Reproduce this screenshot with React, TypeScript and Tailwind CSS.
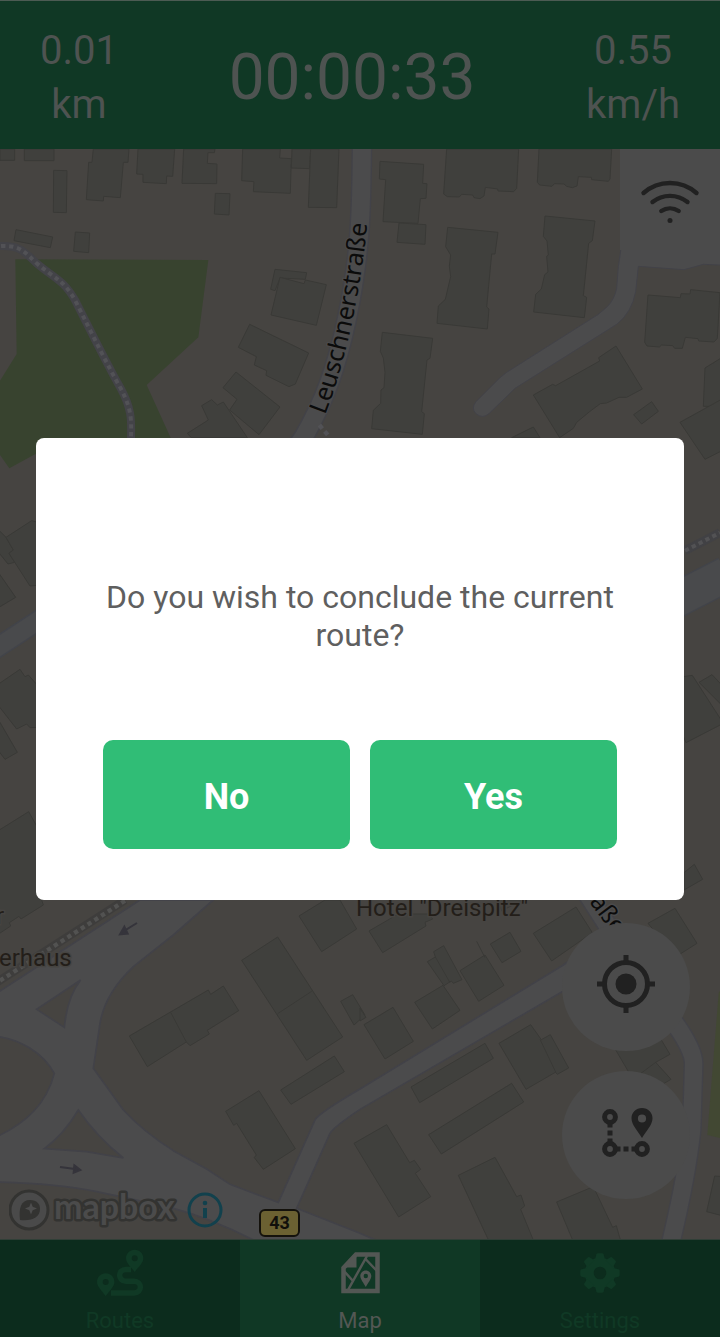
import React from "react";

const upperBuildings = [
  "0,27 44,27 44,61 0,61",
  "73,27 162,27 162,62 73,62",
  "161,91 201,92 199,218 160,217",
  "280,27 387,27 384,67 370,67 361,173 311,169 310,183 259,179 266,67 276,67",
  "414,27 524,27 518,109 500,108 499,131 429,127 429,103 410,102",
  "551,27 645,27 643,38 624,38 622,70 651,72 650,131 546,130",
  "728,27 841,27 839,54 874,56 871,160 760,155 762,125 725,122",
  "876,27 932,27 929,86 874,84",
  "932,27 1017,27 1010,203 925,202",
  "646,160 690,161 687,225 643,222",
  "48,269 158,291 151,323 42,302",
  "226,276 269,279 266,338 221,334",
  "825,388 920,398 916,418 840,414 825,452 812,448",
  "840,412 912,431 916,420 979,434 949,556 813,525",
  "749,553 926,639 886,732 867,740 798,706 800,692 763,675 769,650 715,622",
  "708,696 840,801 777,884 689,810 711,778 669,743",
  "635,779 652,795 670,786 742,893 574,893 562,880 625,840 605,797",
  "1140,64 1271,73 1268,130 1281,131 1278,175 1261,176 1254,250 1149,245 1157,119 1138,117",
  "1197,249 1278,254 1275,313 1191,307",
  "1340,27 1556,27 1550,145 1541,155 1494,153 1493,147 1456,142 1452,168 1440,176 1422,173 1418,165 1385,163 1378,171 1342,170 1331,162",
  "1617,27 1835,27 1830,117 1825,124 1775,119 1774,112 1735,110 1731,138 1717,143 1700,139 1692,132 1663,131 1656,139 1619,135 1612,127",
  "1343,262 1494,277 1485,342 1475,342 1460,501 1467,507 1462,567 1311,550 1315,498 1336,478 1346,435 1352,410 1348,378 1352,345 1337,320",
  "1635,228 1785,243 1777,302 1766,310 1750,467 1760,472 1753,533 1601,516 1607,463 1624,447 1634,404 1644,396 1640,349 1645,345 1641,303 1630,289",
  "1147,577 1298,595 1290,655 1281,660 1265,815 1273,821 1267,883 1115,866 1120,811 1142,790 1143,750 1152,743 1155,697 1150,654 1141,634",
  "1944,465 2041,473 2043,461 2070,462 2072,449 2160,458 2152,595 2142,606 2096,603 2094,596 2056,592 2047,625 2024,625 2018,617 1985,615 1978,621 1941,618 1934,607",
  "1848,618 1927,747 1880,772 1857,772 1820,789 1801,791 1770,814 1730,847 1720,865 1679,893 1600,765 1658,733 1667,737 1799,663 1796,653",
  "1955,785 1975,814 1925,852 1901,824",
  "2170,650 2115,684 2110,799 2170,800",
  "2170,775 2040,847 2115,958 2170,930",
  "1600,861 1620,893 1535,893",
];

const middleBuildings = [
  "-10,294 18,322 40,360 27,370 44,397 24,402 -10,360",
  "18,322 95,272 125,280 125,465 90,468 27,370 40,360",
  "-10,420 47,502 -10,536",
  "-10,766 60,718 75,740 85,735 125,780 125,892 90,893 80,882 50,897 -10,820",
  "-10,860 52,967 15,988 -10,955",
  "1980,750 2077,736 2170,880 2058,938",
  "2097,757 2136,734 2170,770 2170,830",
  "2052,1328 2083,1303 2108,1348 2052,1380",
];

const lowerBuildings = [
  "-10,-175 86,-235 125,-165 125,30 130,45 63,87 57,79 28,98 32,108 -10,136",
  "897,78 975,30 1020,30 1070,117 965,185",
  "833,141 1028,441 920,511 725,211",
  "388,438 625,300 632,313 670,288 716,362 622,421 628,432 570,467 559,456 442,530",
  "842,600 1003,498 1033,545 873,643",
  "677,664 777,602 886,776 790,838 763,803 769,795 710,700 701,706",
  "1022,334 1058,314 1095,375 1062,405",
  "1107,123 1195,72 1285,72 1298,87 1275,97 1278,108 1148,188",
  "1600,130 1728,51 1777,128 1655,213",
  "1471,162 1530,127 1563,184 1506,218",
  "1282,215 1306,201 1301,185 1331,167 1386,269 1360,280 1354,273 1332,287",
  "1380,242 1455,195 1512,286 1436,334",
  "1244,337 1329,286 1380,361 1297,417",
  "1092,404 1179,352 1240,454 1155,507",
  "1080,355 1098,382 1080,393",
  "1944,100 2025,55 2091,160 2028,200",
  "1497,460 1592,404 1624,449 1651,434 1706,534 1672,553 1666,547 1578,598",
  "1233,591 1455,460 1480,505 1259,638",
  "1286,734 1535,580 1571,636 1324,792",
  "1846,478 1978,440 2010,493 1967,517 2013,568 1975,590 1900,570",
  "1062,760 1160,704 1229,818 1243,811 1262,838 1246,850 1292,920 1196,981",
  "1375,856 1485,802 1550,920 1563,915 1574,948 1562,958 1604,1060 1470,1060",
  "1670,936 1780,890 1838,1012 1849,1007 1864,1060 1722,1060",
  "2144,858 2170,860 2170,978 2120,965",
  "1490,30 1570,30 1505,62",
];

function Buildings({ shapes }: { shapes: string[] }) {
  return (
    <g fill="#40403d" stroke="#393936" strokeWidth={3} strokeLinejoin="round">
      {shapes.map((points) => (
        <polygon key={points} points={points} />
      ))}
    </g>
  );
}

function StreetMap() {
  const street = { fontFamily: '"Noto Sans", Roboto, sans-serif' };
  const place = { fontFamily: "Roboto, sans-serif" };
  const avenue = "M1086 0C1084 190 1085 330 1040 540C1010 680 975 780 910 893L870 950";
  const eastRoad = "M1735 -30 1850 150 2030 408Q2080 480 2081 520L2075 720Q2060 860 2012 1060";
  return (
    <svg
      viewBox="0 149 720 1090"
      preserveAspectRatio="xMidYMid slice"
      className="absolute inset-0 size-full"
      role="img"
      aria-label="Street map around Leuschnerstraße"
    >
      <rect y="140" width="720" height="1110" fill="#464441" />

      <g transform="translate(0 140) scale(.333333)">
        <path d="M46 358 625 360 595 592 440 735 515 900 105 943 28 985 0 945V722L50 642Z" fill="#38432f" />
        <path d={avenue} fill="none" stroke="#424248" strokeWidth="62" />
        <path d={avenue} fill="none" stroke="#4b4b4c" strokeWidth="54" />
        <path
          d="M1862 300V333L1855 380 1850 445Q1844 477 1822 500L1795 523 1520 697 1500 713 1428 785Q1412 805 1428 821Q1448 838 1468 820L1545 745 1850 553Q1895 518 1907 455L1915 379 2052 389 2110 373 2180 376V300Z"
          fill="#4b4b4c"
          stroke="#424248"
          strokeWidth="3"
        />
        <path d="M0 318C60 315 75 337 110 370C170 420 190 420 225 480C280 590 325 680 362 745C400 815 393 850 393 900" fill="none" stroke="#434348" strokeWidth="24" />
        <path d="M3 318C60 315 75 337 110 370C170 420 190 420 225 480C280 590 325 680 362 745C400 815 393 850 393 900" fill="none" stroke="#525256" strokeWidth="12" strokeDasharray="13 11" />
        <path d="M958 855 990 893" fill="none" stroke="#525256" strokeWidth="13" strokeDasharray="14 11" />
        <Buildings shapes={upperBuildings} />
      </g>

      <g transform="translate(0 430) scale(.333333)">
        <path d="M-20 660 130 562" stroke="#42444a" strokeWidth="63" />
        <path d="M-20 660 130 562" stroke="#494a4c" strokeWidth="54" />
        <path d="M1980 535 2180 432" stroke="#42444a" strokeWidth="110" />
        <path d="M1980 535 2180 432" stroke="#494a4c" strokeWidth="102" />
        <path d="M2055 362 2160 308" stroke="#414144" strokeWidth="26" />
        <path d="M2055 362 2160 308" stroke="#525254" strokeWidth="12" strokeDasharray="13 10" />
        <Buildings shapes={middleBuildings} />
      </g>

      <g transform="translate(0 890) scale(.333333)">
        <path d="M2170 280 2156 310 2122 735 2170 746Z" fill="#424833" />
        <path d={eastRoad} fill="none" stroke="#424248" strokeWidth="60" />
        <path d={eastRoad} fill="none" stroke="#4b4b4c" strokeWidth="52" />
        <path
          d="M420 30 -20 316V438C60 445 130 490 163 550C140 640 80 700 -20 745V876Q170 880 290 905T520 955Q640 987 780 1060H1150L1080 1030 890 955 990 730Q1000 712 1080 658L1720 286 1740 190 1690 225 1080 597Q955 670 945 690L835 937 690 883 620 837 520 782Q430 725 370 660L280 535 300 400Q315 310 400 230L520 135 640 30Z"
          fill="#4b4b4c"
          stroke="#424248"
          strokeWidth="5"
        />
        <path d="M242 270Q202 320 193 412L110 358ZM235 660Q290 740 370 804L260 785 133 776Q190 735 235 660Z" fill="#464441" stroke="#424248" strokeWidth="5" />
        <path d="M375 30 -10 277" stroke="#3e3d3c" strokeWidth="25" />
        <path d="M375 32 0 272" stroke="#525251" strokeWidth="13" strokeDasharray="13 11" />
        <g stroke="#35343b" strokeWidth="6" fill="#35343b">
          <path d="M411 99 370 124M180 831 225 837" />
          <path d="M373 110 360 133 383 131ZM223 826 241 840 221 848Z" />
        </g>
        <Buildings shapes={lowerBuildings} />
        <g fill="none" stroke="#393936" strokeWidth="3">
          <path d="M512 367 559 456M833 371 935 304M1430 154 1455 203M1306 201 1350 278M1620 448 1668 548M1900 567 1967 517" />
        </g>
      </g>

      <path id="leuschner" d="M325 415C345 365 362 290 369 205" fill="none" />
      <text style={street} fontSize="25" fill="#0b0b0b" stroke="#4b4b4c" strokeWidth="2" paintOrder="stroke">
        <textPath href="#leuschner">Leuschnerstraße</textPath>
      </text>
      <text style={street} fontSize="24" fill="#0b0b0b" stroke="#4b4b4c" strokeWidth="3" paintOrder="stroke" transform="translate(589 902) rotate(53)">
        aße
      </text>
      <g style={place} fontSize="24" fill="#231e19" stroke="#464441" strokeWidth="3" paintOrder="stroke">
        <text x="356" y="916">Hotel "Dreispitz"</text>
        <text x="-1" y="966">erhaus</text>
        <text x="-4" y="924">r</text>
      </g>

      <rect x="260" y="1210" width="39" height="26" rx="5" fill="#6b6132" stroke="#14120c" strokeWidth="2" />
      <text style={place} x="279.5" y="1229" fontSize="18" fontWeight="700" textAnchor="middle" fill="#11100b">43</text>
    </svg>
  );
}

function WifiIcon() {
  return (
    <svg viewBox="0 0 60 44" className="h-11 w-[60px]" fill="none" stroke="#212121" strokeWidth="4.4" strokeLinecap="round" aria-hidden="true">
      <path d="M3.500 13A40 40 0 0 1 56.500 13M12.500 22A28 28 0 0 1 47.500 22M21.300 31A15.500 15.500 0 0 1 38.700 31" />
      <circle cx="30" cy="40.500" r="2.500" fill="#212121" stroke="none" />
    </svg>
  );
}

function LocateIcon() {
  return (
    <svg viewBox="0 0 60 60" className="size-[60px]" fill="none" stroke="#212121" strokeWidth="5" aria-hidden="true">
      <circle cx="30" cy="30" r="21.500" />
      <circle cx="30" cy="30" r="10.500" fill="#212121" stroke="none" />
      <path d="M30 1V8M30 52V59M1 30H8M52 30H59" />
    </svg>
  );
}

function WaypointsIcon() {
  return (
    <svg viewBox="0 0 60 60" className="size-[60px]" fill="none" stroke="#212121" strokeWidth="5" aria-hidden="true">
      <circle cx="14" cy="14" r="5.400" />
      <circle cx="14" cy="46" r="5.400" />
      <circle cx="46" cy="46" r="5.400" />
      <path d="M14 20V24.500M14 27.500V32.500M14 35.500V40M20 46H24.500M27.500 46H32.500M35.500 46H40" />
      <path
        d="M46 5C52 5 56.500 9.500 56.500 15.200C56.500 22 50 28 46 35C42 28 35.500 22 35.500 15.200C35.500 9.500 40 5 46 5ZM46 11.400A4.100 4.100 0 1 0 46 19.600A4.100 4.100 0 1 0 46 11.400Z"
        fill="#212121"
        fillRule="evenodd"
        stroke="none"
      />
    </svg>
  );
}

function RoutesIcon() {
  return (
    <svg viewBox="0 0 48 50" className="h-[50px] w-12" fill="currentColor" aria-hidden="true">
      <path fillRule="evenodd" d="M9.700 25.300C14.700 25.300 18.400 29 18.400 34C18.400 38.500 13.500 43 9.700 48C5.900 43 1 38.500 1 34C1 29 4.700 25.300 9.700 25.300ZM9.700 31A3 3 0 1 0 9.700 37A3 3 0 1 0 9.700 31Z" />
      <path fillRule="evenodd" d="M38.700 1.700C43.700 1.700 47.300 5.400 47.300 10.300C47.300 15 42.500 19 38.700 24C34.900 19 30 15 30 10.300C30 5.400 33.700 1.700 38.700 1.700ZM38.700 7.300A3 3 0 1 0 38.700 13.300A3 3 0 1 0 38.700 7.300Z" />
      <path d="M35 21.500H30C21.500 21.500 21.500 33 30 33.200H38C46.500 33.200 46.500 45 38 45H15" fill="none" stroke="currentColor" strokeWidth="5.500" />
    </svg>
  );
}

function MapIcon() {
  return (
    <svg viewBox="0 0 40 42" className="h-[42px] w-10" fill="none" stroke="currentColor" strokeWidth="3" aria-hidden="true">
      <path d="M16 2.500H37.500V39H3.500V16Z" strokeWidth="4.500" />
      <path d="M2 15.500H16.500V1Z" fill="currentColor" stroke="none" />
      <path d="M27 4 8 38M25.500 7 37 19M3 18 13 29" strokeWidth="2.500" />
      <path
        d="M25.800 18.500C29 18.500 31.300 21 31.300 24C31.300 27.500 28 30.500 25.800 35C23.600 30.500 20.300 27.500 20.300 24C20.300 21 22.600 18.500 25.800 18.500ZM25.800 21.800A2.200 2.200 0 1 0 25.800 26.200A2.200 2.200 0 1 0 25.800 21.800Z"
        fill="currentColor"
        fillRule="evenodd"
        stroke="none"
      />
    </svg>
  );
}

function GearIcon() {
  const teeth = [0, 45, 90, 135, 180, 225, 270, 315];
  return (
    <svg viewBox="0 0 40 40" className="size-10" fill="currentColor" aria-hidden="true">
      <circle cx="20" cy="20" r="10.800" fill="none" stroke="currentColor" strokeWidth="9" />
      {teeth.map((angle) => (
        <path key={angle} d="M15 7 16.300 1.500Q16.600 0.300 18 0.300H22Q23.400 0.300 23.700 1.500L25 7Z" transform={`rotate(${angle} 20 20)`} />
      ))}
    </svg>
  );
}

function MapboxLogo() {
  return (
    <svg viewBox="0 0 170 48" className="h-12 w-[170px]" role="img" aria-label="Mapbox">
      <circle cx="20" cy="24" r="19" fill="#4a4a4a" stroke="#333331" strokeWidth="3" />
      <path d="M11 34C9.500 22 12 14 21 14C28 14 31 18 31 23C31 31 23 35.500 11 34Z" fill="#333331" />
      <path d="M22 16.500 23.700 20.800 28 22.500 23.700 24.200 22 28.500 20.300 24.200 16 22.500 20.300 20.800Z" fill="#4d4d4d" />
      <text x="45" y="33" fontSize="34" fontWeight="700" fill="#4b4b4b" stroke="#333331" strokeWidth="5" strokeLinejoin="round" paintOrder="stroke" style={{ fontFamily: "Lato, sans-serif" }}>
        mapbox
      </text>
    </svg>
  );
}

function Metric({ value, unit }: { value: string; unit: string }) {
  return (
    <div className="text-center text-[40px] leading-[54px]">
      <p>{value}</p>
      <p>{unit}</p>
    </div>
  );
}

function Tab({ label, active, children }: { label: string; active?: boolean; children: React.ReactNode }) {
  return (
    <a
      href={`#${label.toLowerCase()}`}
      aria-current={active ? "page" : undefined}
      className={
        active
          ? "flex flex-1 flex-col items-center justify-between bg-[#103825] pt-2 pb-1 text-[#535754]"
          : "flex flex-1 flex-col items-center justify-between bg-[#0c2c1d] pt-2 pb-1 text-[#103925]"
      }
    >
      <span className="flex h-[50px] items-center">{children}</span>
      <span className="text-[22px] leading-6">{label}</span>
    </a>
  );
}

export default function App() {
  return (
    <div className="relative flex min-h-screen flex-col bg-[#464441] font-['Roboto',sans-serif]">
      <header className="flex h-[149px] items-center justify-between border-t border-[#4c5b53] bg-[#103825] px-10 pt-1.5 text-[#4e5351]">
        <Metric value="0.01" unit="km" />
        <p className="text-[64px] leading-none">00:00:33</p>
        <Metric value="0.55" unit="km/h" />
      </header>

      <main className="relative flex-1 overflow-hidden">
        <StreetMap />
        <div className="absolute top-0 right-0 flex h-[101px] w-[100px] items-center justify-center bg-[#4b4b4b] pt-1">
          <WifiIcon />
        </div>
        <div className="absolute right-[30px] bottom-10 flex flex-col gap-5">
          <button type="button" aria-label="Centre on my location" className="flex size-32 items-center justify-center rounded-full bg-[#4b4b4b] pb-1.5">
            <LocateIcon />
          </button>
          <button type="button" aria-label="Show waypoints" className="flex size-32 items-center justify-center rounded-full bg-[#4b4b4b] pb-1">
            <WaypointsIcon />
          </button>
        </div>
        <div className="absolute bottom-[5px] left-[9px] flex items-center gap-2">
          <MapboxLogo />
          <button type="button" aria-label="Map information">
            <svg viewBox="0 0 36 36" className="size-9" fill="none" stroke="#12414d" strokeWidth="3" aria-hidden="true">
              <circle cx="18" cy="18" r="16" />
              <path d="M18 16V26" strokeWidth="4" />
              <circle cx="18" cy="11" r="2.300" fill="#12414d" stroke="none" />
            </svg>
          </button>
        </div>
      </main>

      <nav className="flex h-[98px] border-t border-[#303f37]">
        <Tab label="Routes">
          <RoutesIcon />
        </Tab>
        <Tab label="Map" active>
          <MapIcon />
        </Tab>
        <Tab label="Settings">
          <GearIcon />
        </Tab>
      </nav>

      <div className="absolute inset-0 flex items-center justify-center px-9">
        <section role="dialog" aria-modal="true" aria-labelledby="conclude-title" className="w-full rounded-lg bg-white px-[67px] pt-[140px] pb-[51px]">
          <h1 id="conclude-title" className="text-center text-[32px] leading-[38px] text-[#5f5f5f]">
            Do you wish to conclude the current route?
          </h1>
          <div className="mt-[86px] flex gap-5 text-4xl font-bold text-white">
            <button type="button" className="h-[109px] flex-1 rounded-[10px] bg-[#30bd76] pt-1.5">
              No
            </button>
            <button type="button" className="h-[109px] flex-1 rounded-[10px] bg-[#30bd76] pt-1.5">
              Yes
            </button>
          </div>
        </section>
      </div>
    </div>
  );
}
